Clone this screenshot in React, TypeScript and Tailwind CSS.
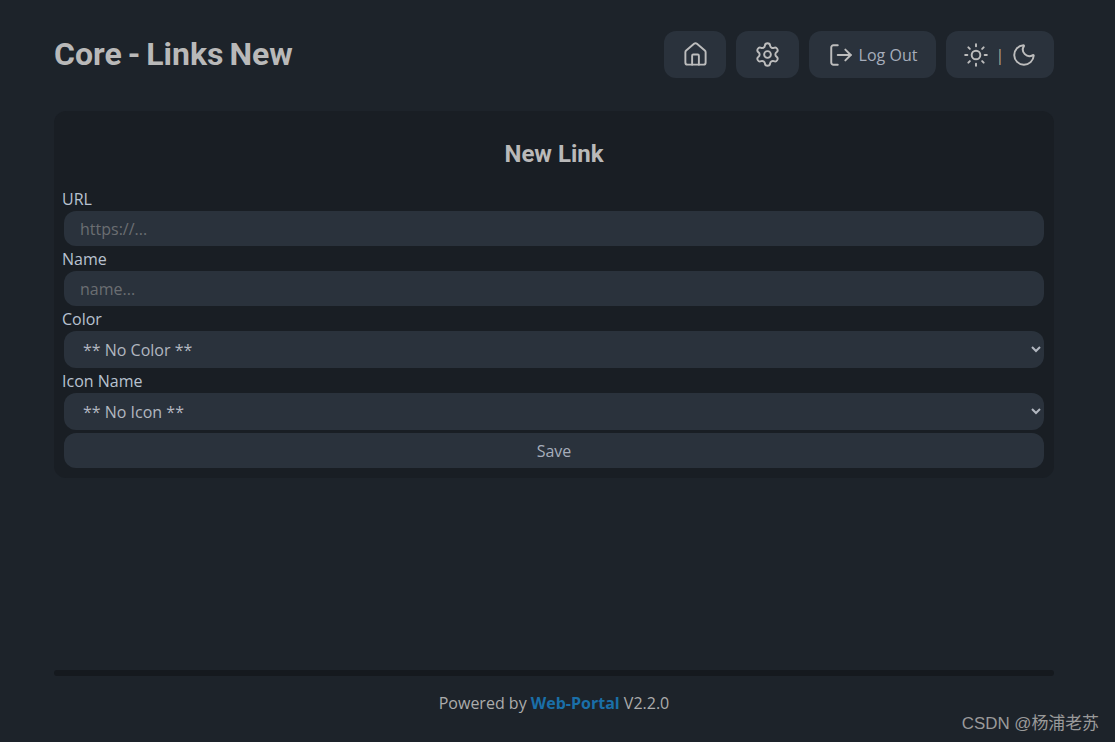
import { House, LogOut, Moon, Settings, Sun } from 'lucide-react';

const labelClass = 'block h-6 text-base leading-6 text-[#b8c2d0]';
const fieldClass =
  "mx-[2px] block w-[980px] rounded-xl border-0 bg-[#2a323c] text-base text-[#b2b7c0] outline-none font-['Open_Sans',sans-serif]";

const TextField = ({ label, placeholder }: { label: string; placeholder: string }) => (
  <div className="mb-px">
    <label className={labelClass}>{label}</label>
    <input
      placeholder={placeholder}
      className={`${fieldClass} h-[35px] px-4 placeholder:text-[#6b6e72]`}
    />
  </div>
);

const SelectField = ({ label, value }: { label: string; value: string }) => (
  <div className="mb-px">
    <label className={labelClass}>{label}</label>
    <select className={`${fieldClass} h-[37px] pl-[15px] pr-0 [color-scheme:dark]`} defaultValue={value}>
      <option>{value}</option>
    </select>
  </div>
);

const NavButton = ({ className, children }: { className: string; children: React.ReactNode }) => (
  <button className={`flex h-[47px] items-center justify-center rounded-xl bg-[#2a323c] text-[#a6adbb] ${className}`}>
    {children}
  </button>
);

const App = () => {
  return (
    <div className="relative flex h-[742px] flex-col overflow-hidden bg-[#1d232a] pl-[54px] pr-[61px] font-['Open_Sans',sans-serif] text-[#a6adbb]">
      <header className="flex items-center justify-between pt-[31px]">
        <h1 className="font-['Roboto',sans-serif] text-[32px] font-bold leading-[47px] text-[#b9b9b9] [word-spacing:-2px]">
          Core - Links New
        </h1>
        <div className="flex gap-[10px]">
          <NavButton className="w-[62px]">
            <House size={27} strokeWidth={1.7} className="text-[#bdbdbd]" />
          </NavButton>
          <NavButton className="w-[63px]">
            <Settings size={27} strokeWidth={1.7} className="text-[#bdbdbd]" />
          </NavButton>
          <NavButton className="w-[127px] gap-[5px]">
            <LogOut size={26} strokeWidth={1.8} className="text-[#bdbdbd]" />
            <span className="text-base">Log Out</span>
          </NavButton>
          <NavButton className="w-[108px] gap-[7px]">
            <Sun size={26} strokeWidth={1.8} className="text-[#bdbdbd]" />
            <span className="text-base text-[#b0a890]">|</span>
            <Moon size={26} strokeWidth={1.8} className="text-[#bdbdbd]" />
          </NavButton>
        </div>
      </header>

      <main className="mt-[33px] h-[367px] rounded-xl bg-[#191e24] px-2">
        <h2 className="h-[76px] pt-[27px] text-center font-['Roboto',sans-serif] text-2xl font-bold leading-[33px] text-[#b9b9b9]">
          New Link
        </h2>
        <TextField label="URL" placeholder="https://..." />
        <TextField label="Name" placeholder="name..." />
        <SelectField label="Color" value="** No Color **" />
        <SelectField label="Icon Name" value="** No Icon **" />
        <button className="mx-[2px] mt-[3px] block h-[35px] w-[980px] rounded-xl bg-[#2a323c] text-base text-[#a6adbb]">
          Save
        </button>
      </main>

      <footer className="mt-auto h-[72px]">
        <div className="h-[6px] rounded-sm bg-[#15191e]" />
        <p className="mt-[15px] text-center text-base leading-6 text-[#acacac]">
          Powered by <span className="font-bold text-[#1a6fa8]">Web-Portal</span> V2.2.0
        </p>
      </footer>

      <span className="absolute bottom-[7px] right-[16px] font-['Liberation_Sans','Noto_Sans_CJK_SC',sans-serif] text-[16.9px] leading-[22px] text-[#9a9a9a]">
        CSDN @杨浦老苏
      </span>
    </div>
  );
};

export default App;
